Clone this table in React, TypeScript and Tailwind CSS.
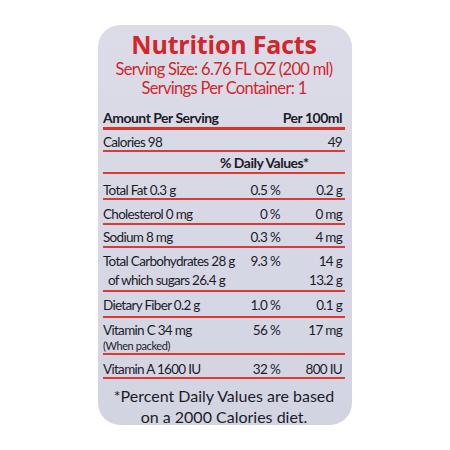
import React from 'react'

const rows = [
  { label: 'Total Fat 0.3 g', pct: '0.5 %', per: '0.2 g', h: 'h-[24px]', pb: 'pb-[0px]' },
  { label: 'Cholesterol 0 mg', pct: '0 %', per: '0 mg', h: 'h-[23px]', pb: 'pb-[1px]' },
  { label: 'Sodium 8 mg', pct: '0.3 %', per: '4 mg', h: 'h-[21px]', pb: 'pb-[1px]' },
]

function Line({ thick }: { thick?: boolean }) {
  return <div className={thick ? 'h-[3px] bg-[#d9312b]' : 'h-[2px] bg-[#dc3a33]'} />
}

export default function App() {
  return (
    <div className="w-[450px] h-[450px] bg-white pt-[25px]">
      <div className="mx-auto w-[254px] h-[400px] rounded-[22px] bg-gradient-to-b from-[#dcdce8] to-[#d3d4e2] pl-[5px] pr-[7px] text-[#1c1c28] font-['Lato',sans-serif] whitespace-nowrap">
        {/* header */}
        <div className="pt-[4px] text-center text-[#d3262a]">
          <div className="h-[30px] leading-[30px] text-[25px] font-bold font-['Open_Sans',sans-serif] tracking-[-0.2px]">Nutrition Facts</div>
          <div className="h-[20px] leading-[20px] text-[16.5px] tracking-[-0.7px]">Serving Size: 6.76 FL OZ (200 ml)</div>
          <div className="h-[19px] leading-[19px] text-[16.5px] tracking-[-0.7px]">Servings Per Container: 1</div>
        </div>

        <div className="mt-[9px] h-[20px] flex items-center justify-between pr-[3px] text-[14px] font-bold tracking-[-0.5px]">
          <span>Amount Per Serving</span>
          <span>Per 100ml</span>
        </div>
        <Line thick />

        <div className="h-[20px] flex items-end pb-[0px] justify-between pr-[3px] text-[13.5px] leading-[16px] tracking-[-0.7px]">
          <span>Calories 98</span>
          <span>49</span>
        </div>
        <Line />

        <div className="h-[20px] flex items-end pb-[1px] pl-[117px] text-[14px] leading-[16px] font-bold tracking-[-0.5px]">
          % Daily Values*
        </div>
        <Line />

        {rows.map((r, i) => (
          <div key={i}>
            <div className={`${r.h} ${r.pb} flex items-end text-[13.5px] leading-[16px] tracking-[-0.7px]`}>
              <span className="flex-1">{r.label}</span>
              <span className="w-[45px] text-right">{r.pct}</span>
              <span className="w-[65px] pr-[3px] text-right">{r.per}</span>
            </div>
            <Line />
          </div>
        ))}

        <div className="h-[42px] pt-[4px] flex flex-col text-[13.5px] leading-[19px] tracking-[-0.7px]">
          <div className="flex">
            <span className="flex-1">Total Carbohydrates 28 g</span>
            <span className="w-[45px] text-right">9.3 %</span>
            <span className="w-[65px] pr-[3px] text-right">14 g</span>
          </div>
          <div className="flex">
            <span className="flex-1 pl-[5px]">of which sugars 26.4 g</span>
            <span className="w-[65px] pr-[3px] text-right">13.2 g</span>
          </div>
        </div>
        <Line />

        <div className="h-[24px] pb-[3px] flex items-end text-[13.5px] leading-[16px] tracking-[-0.7px]">
          <span className="flex-1">Dietary Fiber 0.2 g</span>
          <span className="w-[45px] text-right">1.0 %</span>
          <span className="w-[65px] pr-[3px] text-right">0.1 g</span>
        </div>
        <Line />

        <div className="h-[35px] pt-[3px] flex flex-col tracking-[-0.7px]">
          <div className="flex text-[13.5px] leading-[18px]">
            <span className="flex-1">Vitamin C 34 mg</span>
            <span className="w-[45px] text-right">56 %</span>
            <span className="w-[65px] pr-[3px] text-right">17 mg</span>
          </div>
          <div className="text-[11px] leading-[13px] tracking-[-0.4px]">(When packed)</div>
        </div>
        <Line />

        <div className="h-[22px] pb-[0px] flex items-end text-[13.5px] leading-[16px] tracking-[-0.7px]">
          <span className="flex-1">Vitamin A 1600 IU</span>
          <span className="w-[45px] text-right">32 %</span>
          <span className="w-[65px] pr-[3px] text-right">800 IU</span>
        </div>
        <Line />

        <div className="pt-[6px] text-center text-[16px] leading-[21px]">
          <div>*Percent Daily Values are based</div>
          <div>on a 2000 Calories diet.</div>
        </div>
      </div>
    </div>
  )
}
